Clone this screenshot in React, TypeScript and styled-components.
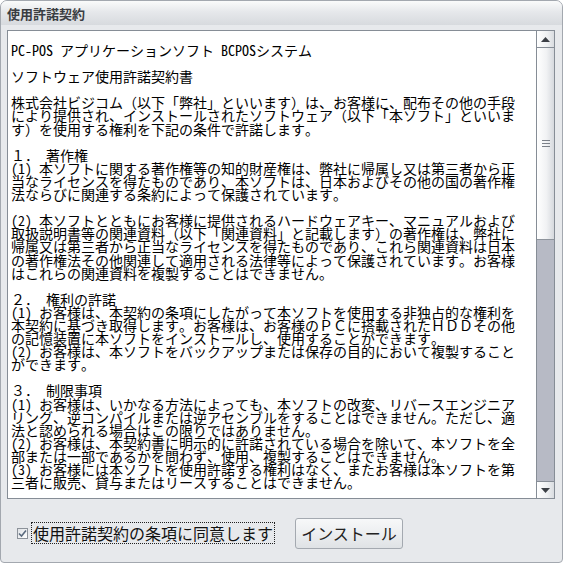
import React, { useState } from 'react';
import styled, { createGlobalStyle } from 'styled-components';

const GlobalStyle = createGlobalStyle`
    html, body {
        margin: 0;
        padding: 0;
        background: #ffffff;
    }

    * {
        box-sizing: border-box;
    }
`

const AGREEMENT = [
    'PC-POS アプリケーションソフト BCPOSシステム',
    '',
    'ソフトウェア使用許諾契約書',
    '',
    '株式会社ビジコム（以下「弊社」といいます）は、お客様に、配布その他の手段',
    'により提供され、インストールされたソフトウェア（以下「本ソフト」といいま',
    'す）を使用する権利を下記の条件で許諾します。',
    '',
    '１． 著作権',
    '(1) 本ソフトに関する著作権等の知的財産権は、弊社に帰属し又は第三者から正',
    '当なライセンスを得たものであり、本ソフトは、日本およびその他の国の著作権',
    '法ならびに関連する条約によって保護されています。',
    '',
    '(2) 本ソフトとともにお客様に提供されるハードウェアキー、マニュアルおよび',
    '取扱説明書等の関連資料（以下「関連資料」と記載します）の著作権は、弊社に',
    '帰属又は第三者から正当なライセンスを得たものであり、これら関連資料は日本',
    'の著作権法その他関連して適用される法律等によって保護されています。お客様',
    'はこれらの関連資料を複製することはできません。',
    '',
    '２． 権利の許諾',
    '(1) お客様は、本契約の条項にしたがって本ソフトを使用する非独占的な権利を',
    '本契約に基づき取得します。お客様は、お客様のＰＣに搭載されたＨＤＤその他',
    'の記憶装置に本ソフトをインストールし、使用することができます。',
    '(2) お客様は、本ソフトをバックアップまたは保存の目的において複製すること',
    'ができます。',
    '',
    '３． 制限事項',
    '(1) お客様は、いかなる方法によっても、本ソフトの改変、リバースエンジニア',
    'リング、逆コンパイルまたは逆アセンブルをすることはできません。ただし、適',
    '法と認められる場合はこの限りではありません。',
    '(2) お客様は、本契約書に明示的に許諾されている場合を除いて、本ソフトを全',
    '部または一部であるかを問わず、使用、複製することはできません。',
    '(3) お客様には本ソフトを使用許諾する権利はなく、またお客様は本ソフトを第',
    '三者に販売、貸与またはリースすることはできません。',
].join('\n')

const Window = styled.div`
    display: flex;
    flex-direction: column;
    width: 563px;
    height: 563px;
    background-color: #e7e9ec;
    border: 1px solid #a3a8af;
    border-radius: 7px 7px 4px 4px;
    overflow: hidden;
`

const TitleBar = styled.div`
    display: flex;
    align-items: center;
    height: 24px;
    padding: 0px 6px;
    background: linear-gradient(to bottom, #fafbfb 0%, #e6e8eb 45%, #d7dade 100%);
    font-family: "Noto Sans CJK JP", sans-serif;
    font-size: 13px;
    font-weight: 700;
    color: #3a3d42;
`

const Body = styled.div`
    display: flex;
    flex-direction: column;
    flex: 1;
    padding: 5px 7px 0px 6px;
`

const TextBox = styled.div`
    display: flex;
    height: 469px;
    border: 1px solid #868d96;
    background-color: #ffffff;
`

const Agreement = styled.div`
    flex: 1;
    overflow: hidden;
    padding: 13px 0px 0px 3px;
    font-family: "Noto Sans Mono CJK JP", "Noto Sans CJK JP", monospace;
    font-size: 14px;
    line-height: 13.1px;
    color: #000000;
    white-space: pre;
`

const ScrollBar = styled.div`
    display: flex;
    flex-direction: column;
    width: 18px;
    border-left: 1px solid #868d96;
    background-color: #b7bac5;
`

const ArrowButton = styled.div`
    display: flex;
    align-items: center;
    justify-content: center;
    height: 17px;
    background: linear-gradient(to right, #ffffff 0%, #eef0f2 60%, #d9dce0 100%);
    border-top: ${(props: { down?: boolean }) => props.down ? '1px solid #868d96' : 'none'};
    border-bottom: ${(props: { down?: boolean }) => props.down ? 'none' : '1px solid #868d96'};
`

const Thumb = styled.div`
    display: flex;
    align-items: center;
    justify-content: center;
    height: 192px;
    background: linear-gradient(to right, #ffffff 0%, #f1f2f4 55%, #d6d9de 100%);
    border-bottom: 1px solid #8e949c;
`

const Track = styled.div`
    flex: 1;
`

const Footer = styled.div`
    display: flex;
    align-items: center;
    flex: 1;
    padding: 5px 0px 0px 10px;
`

const CheckLabel = styled.label`
    display: flex;
    align-items: center;
    gap: 3px;
    cursor: default;
`

const CheckBox = styled.span`
    display: flex;
    align-items: center;
    justify-content: center;
    width: 11px;
    height: 11px;
    border: 1px solid #8c929a;
    background: linear-gradient(to bottom right, #dfe2e6, #ffffff);
`

const LabelText = styled.span`
    padding: 0px 1px;
    border: 1px dotted #202020;
    font-family: "Noto Sans CJK JP", sans-serif;
    font-size: 16px;
    line-height: 20px;
    color: #111111;
`

const InstallButton = styled.button`
    width: 108px;
    height: 31px;
    margin-left: 20px;
    border: 1px solid #a4a9b0;
    border-radius: 3px;
    background: linear-gradient(to bottom, #f7f8f9 0%, #eceef0 50%, #dfe2e5 100%);
    font-family: "Noto Sans CJK JP", sans-serif;
    font-size: 16px;
    color: #222222;
    padding: 0px;
    cursor: pointer;
`

const Arrow = ({ down }: { down?: boolean }) => (
    <svg width="9" height="5" viewBox="0 0 9 5">
        <path d={down ? 'M0 0 H9 L4.5 5 Z' : 'M0 5 H9 L4.5 0 Z'} fill="#3b3f45" />
    </svg>
)

const Grip = () => (
    <svg width="8" height="7" viewBox="0 0 8 7">
        <path d="M0 0.5 H8 M0 3.5 H8 M0 6.5 H8" stroke="#7b8088" strokeWidth="1" />
    </svg>
)

const App = () => {
    const [agreed, setAgreed] = useState(true);

    return (
        <>
            <GlobalStyle />
            <Window>
                <TitleBar>使用許諾契約</TitleBar>
                <Body>
                    <TextBox>
                        <Agreement>{AGREEMENT}</Agreement>
                        <ScrollBar>
                            <ArrowButton><Arrow /></ArrowButton>
                            <Thumb><Grip /></Thumb>
                            <Track />
                            <ArrowButton down><Arrow down /></ArrowButton>
                        </ScrollBar>
                    </TextBox>
                    <Footer>
                        <CheckLabel onClick={() => setAgreed(!agreed)}>
                            <CheckBox>
                                { agreed && (
                                    <svg width="9" height="9" viewBox="0 0 9 9">
                                        <path d="M1 4.5 L3.5 7 L8 1.5" fill="none" stroke="#5a6a7e" strokeWidth="1.6" />
                                    </svg>
                                )}
                            </CheckBox>
                            <LabelText>使用許諾契約の条項に同意します</LabelText>
                        </CheckLabel>
                        <InstallButton>インストール</InstallButton>
                    </Footer>
                </Body>
            </Window>
        </>
    )
}

export default App;
